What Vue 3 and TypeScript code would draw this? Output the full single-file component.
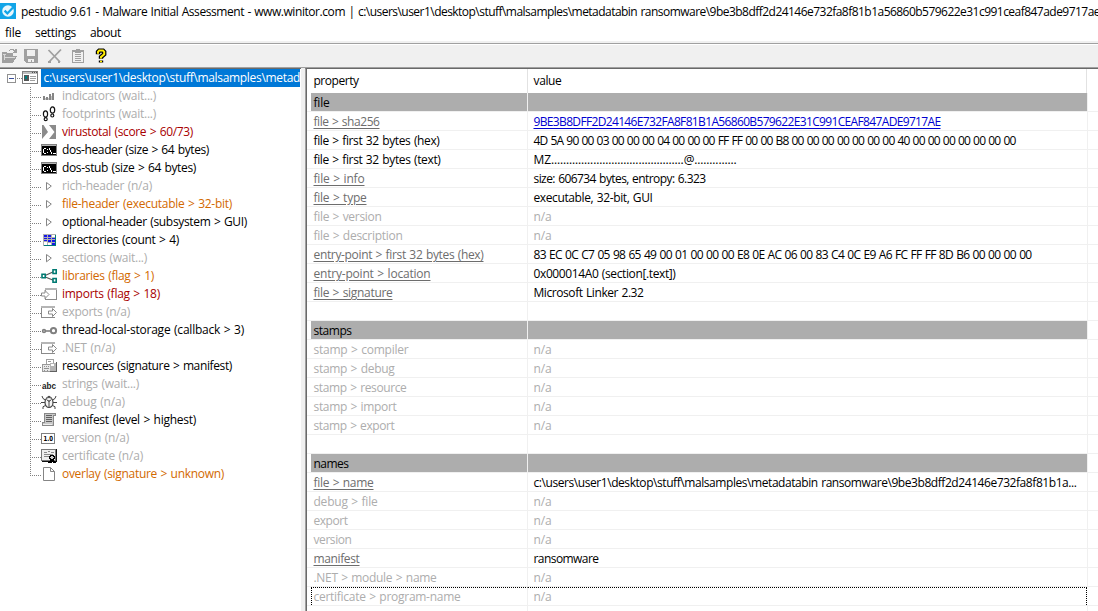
<script setup lang="ts">
interface TreeItem {
  icon: string
  label: string
  width: number
  tone: 'idle' | 'plain' | 'warn' | 'alert'
}
interface Row {
  name: string
  nameWidth: number
  value?: string
  valueWidth?: number
  kind: 'group' | 'idle' | 'plain' | 'link' | 'blank'
  hash?: boolean
  focused?: boolean
}

// Spreads letter spacing so a label takes exactly the given width.
const vFit = {
  mounted(el: HTMLElement, binding: { value?: number }) {
    const chars = (el.textContent ?? '').length
    if (!binding.value || !chars) return
    const natural = el.getBoundingClientRect().width
    el.style.letterSpacing = `${(binding.value - natural) / chars}px`
  },
}

const menus = [
  { label: 'file', width: 16 },
  { label: 'settings', width: 41 },
  { label: 'about', width: 31 },
]

const tree: TreeItem[] = [
  { icon: 'bars', label: 'indicators (wait...)', width: 94, tone: 'idle' },
  { icon: 'feet', label: 'footprints (wait...)', width: 94, tone: 'idle' },
  { icon: 'virus', label: 'virustotal (score > 60/73)', width: 131, tone: 'alert' },
  { icon: 'dos', label: 'dos-header (size > 64 bytes)', width: 147, tone: 'plain' },
  { icon: 'dos', label: 'dos-stub (size > 64 bytes)', width: 134, tone: 'plain' },
  { icon: 'tri', label: 'rich-header (n/a)', width: 90, tone: 'idle' },
  { icon: 'tri', label: 'file-header (executable > 32-bit)', width: 170, tone: 'warn' },
  { icon: 'tri', label: 'optional-header (subsystem > GUI)', width: 185, tone: 'plain' },
  { icon: 'grid', label: 'directories (count > 4)', width: 117, tone: 'plain' },
  { icon: 'tri', label: 'sections (wait...)', width: 85, tone: 'idle' },
  { icon: 'share', label: 'libraries (flag > 1)', width: 92, tone: 'warn' },
  { icon: 'import', label: 'imports (flag > 18)', width: 98, tone: 'alert' },
  { icon: 'export', label: 'exports (n/a)', width: 68, tone: 'idle' },
  { icon: 'link', label: 'thread-local-storage (callback > 3)', width: 182, tone: 'plain' },
  { icon: 'export', label: '.NET (n/a)', width: 53, tone: 'idle' },
  { icon: 'res', label: 'resources (signature > manifest)', width: 170, tone: 'plain' },
  { icon: 'abc', label: 'strings (wait...)', width: 77, tone: 'idle' },
  { icon: 'bug', label: 'debug (n/a)', width: 63, tone: 'idle' },
  { icon: 'scroll', label: 'manifest (level > highest)', width: 134, tone: 'plain' },
  { icon: 'ver', label: 'version (n/a)', width: 67, tone: 'idle' },
  { icon: 'cert', label: 'certificate (n/a)', width: 81, tone: 'idle' },
  { icon: 'page', label: 'overlay (signature > unknown)', width: 162, tone: 'warn' },
]

const idle = (name: string, nameWidth: number): Row => ({
  name, nameWidth, value: 'n/a', valueWidth: 18, kind: 'idle',
})
const blank: Row = { name: '', nameWidth: 0, kind: 'blank' }

const rows: Row[] = [
  { name: 'file', nameWidth: 16, kind: 'group' },
  { name: 'file > sha256', nameWidth: 66, value: '9BE3B8DFF2D24146E732FA8F81B1A56860B579622E31C991CEAF847ADE9717AE', valueWidth: 407, kind: 'link', hash: true },
  { name: 'file > first 32 bytes (hex)', nameWidth: 126, value: '4D 5A 90 00 03 00 00 00 04 00 00 00 FF FF 00 00 B8 00 00 00 00 00 00 00 40 00 00 00 00 00 00 00', valueWidth: 482, kind: 'plain' },
  { name: 'file > first 32 bytes (text)', nameWidth: 127, value: 'MZ' + '.'.repeat(44) + '@' + '.'.repeat(14), valueWidth: 203, kind: 'plain' },
  { name: 'file > info', nameWidth: 51, value: 'size: 606734 bytes, entropy: 6.323', valueWidth: 172, kind: 'link' },
  { name: 'file > type', nameWidth: 53, value: 'executable, 32-bit, GUI', valueWidth: 119, kind: 'link' },
  idle('file > version', 68),
  idle('file > description', 89),
  { name: 'entry-point > first 32 bytes (hex)', nameWidth: 170, value: '83 EC 0C C7 05 98 65 49 00 01 00 00 00 E8 0E AC 06 00 83 C4 0C E9 A6 FC FF FF 8D B6 00 00 00 00', valueWidth: 498, kind: 'link' },
  { name: 'entry-point > location', nameWidth: 117, value: '0x000014A0 (section[.text])', valueWidth: 142, kind: 'link' },
  { name: 'file > signature', nameWidth: 79, value: 'Microsoft Linker 2.32', valueWidth: 110, kind: 'link' },
  blank,
  { name: 'stamps', nameWidth: 38, kind: 'group' },
  idle('stamp > compiler', 95),
  idle('stamp > debug', 81),
  idle('stamp > resource', 93),
  idle('stamp > import', 83),
  idle('stamp > export', 81),
  blank,
  { name: 'names', nameWidth: 35, kind: 'group' },
  { name: 'file > name', nameWidth: 60, value: 'c:\\users\\user1\\desktop\\stuff\\malsamples\\metadatabin ransomware\\9be3b8dff2d24146e732fa8f81b1a...', valueWidth: 543, kind: 'link' },
  idle('debug > file', 64),
  idle('export', 34),
  idle('version', 38),
  { name: 'manifest', nameWidth: 46, value: 'ransomware', valueWidth: 65, kind: 'link' },
  idle('.NET > module > name', 123),
  { ...idle('certificate > program-name', 147), focused: true },
  blank,
]
</script>

<template>
  <div class="window">
    <header class="title">
      <svg class="logo" width="16" height="16" viewBox="0 0 16 16">
        <rect width="16" height="16" fill="#12a5e8" />
        <circle cx="8" cy="8" r="5.8" fill="#e9f7fd" />
        <path d="M4.6 7.6 7.4 10.4 13 4.6" fill="none" stroke="#12a5e8" stroke-width="2.2" />
      </svg>
      <div class="caption">
        <span v-fit="337" class="t">pestudio 9.61 - Malware Initial Assessment - www.winitor.com | </span>
        <span v-fit="742" class="t">c:\users\user1\desktop\stuff\malsamples\metadatabin ransomware\9be3b8dff2d24146e732fa8f81b1a56860b579622e31c991ceaf847ade9717ae</span>
      </div>
    </header>
    <nav class="menu">
      <span v-for="m in menus" :key="m.label" v-fit="m.width" class="t">{{ m.label }}</span>
    </nav>
    <div class="toolbar">
      <svg width="108" height="20" viewBox="0 0 108 20" shape-rendering="crispEdges">
        <g fill="#a0a0a0">
          <path d="M2 6h4l1 1h6v3h4l-4 7H2z" />
          <path d="M3 8h3v1H3zM5 11h10v1H5zM4 9h1v5H4z" fill="#d8d8d8" />
          <path d="M9 4h1V3h4v1h1V3h2v4h-4V6h1V5h-1V4h-3v1H9z" />
          <path d="M24 3h14v14H26l-2-2z" />
          <path d="M27 4h8v6h-8zM28 13h6v3h-2v-2h-1v2h-3z" fill="#f0f0f0" />
          <path d="M72 4h4V3h4v1h4v13H72zM73 6v10h10V6z" fill-rule="evenodd" />
          <path d="M75 4h6v3h-6zM75 8h6v1h-6zM75 10h6v1h-6zM75 12h6v1h-6zM75 14h6v1h-6z" />
        </g>
        <path d="M48.500 4 60 16M61 3.500 48.500 16.500" stroke="#a0a0a0" stroke-width="1.800" fill="none" shape-rendering="auto" />
        <path d="M48 15h3v2h-3zM58 15h2v2h-2z" fill="#a0a0a0" />
        <g shape-rendering="auto" fill="none">
          <path d="M98 8.200V5.800L99.200 4.600H103L104.200 5.800V8.200L101 11V12.800M101 14.600V16.600" stroke="#000" stroke-width="4.400" />
          <path d="M98 7.800V5.800L99.200 4.600H103L104.200 5.800V8.200L101 11V12.400M101 14.800V16.200" stroke="#ffec00" stroke-width="2" />
        </g>
      </svg>
    </div>

    <main class="panes">
      <section class="tree">
        <div class="root">
          <svg width="41" height="18" viewBox="0 0 41 18" shape-rendering="crispEdges">
            <path d="M7.500 5.500h8v8h-8z" fill="#fff" stroke="#919191" />
            <path d="M9 9h5v1H9z" fill="#3b4f9b" />
            <path d="M17 9.500h5" stroke="#808080" stroke-dasharray="1 1" />
            <path d="M22.500 2.500h15v12h-15z" fill="#fff" stroke="#808080" />
            <path d="M23 3h14v2H23z" fill="#c0c0c0" />
            <path d="M32 3h1v1h-1zM34 3h1v1h-1zM36 3h1v1h-1z" fill="#505050" />
            <path d="M24 6h5v6h-5z" fill="#555" /><path d="M25 7h2v3h-2z" fill="#007f7f" />
            <path d="M30 7h6v1h-6zM30 9h6v1h-6zM30 11h5v1h-5z" fill="#a0a0a0" />
          </svg>
          <div class="selected"><span v-fit="256.5" class="t">c:\users\user1\desktop\stuff\malsamples\metad</span></div>
        </div>
        <div v-for="(item, i) in tree" :key="item.label" class="node">
          <svg class="branch" width="11" height="18" viewBox="0 0 11 18" shape-rendering="crispEdges">
            <path :d="i === tree.length - 1 ? 'M.5 0V11' : 'M.5 0V18'" stroke="#808080" stroke-dasharray="1 1" />
            <path d="M2 10.500H11" stroke="#808080" stroke-dasharray="1 1" />
          </svg>
          <svg class="icon" width="17" height="18" viewBox="0 0 17 18" shape-rendering="crispEdges">
            <g v-if="item.icon === 'bars'" fill="#858585">
              <path d="M2 9h2v4H2zM5 10h2v3H5zM8 7h2v6H8zM11 6h2v7h-2z" />
              <path d="M4 11h1v2H4zM7 11h1v2H7zM10 9h1v4h-1z" fill="#c4c4c4" />
            </g>
            <g v-else-if="item.icon === 'feet'" fill="#fff" stroke="#111" stroke-width="1.200" shape-rendering="auto">
              <ellipse cx="4.500" cy="9" rx="2.100" ry="3.100" /><ellipse cx="4.700" cy="14.200" rx="1.500" ry="1.500" />
              <ellipse cx="11.500" cy="5" rx="2.200" ry="3.100" /><ellipse cx="11.300" cy="10.500" rx="1.500" ry="1.500" />
            </g>
            <g v-else-if="item.icon === 'virus'" shape-rendering="auto">
              <path d="M1 2h14v14H1z" fill="#8b8b8b" />
              <path d="M2.500 2H8L13.500 9 8 16H1l6-7z" fill="#fff" />
            </g>
            <g v-else-if="item.icon === 'dos'">
              <path d="M0 3h16v12H0z" fill="#000" />
              <path d="M0 3h16v2H0z" fill="#b4b4b4" />
              <path d="M10 3h1v1h-1zM12 3h1v1h-1zM14 3h1v1h-1z" fill="#333" />
              <path d="M.5 3.500h15v11H.5z" stroke="#808080" fill="none" />
              <path d="M3 7h2v1H3v4h2v1H3v-1H2V8h1zM6 8h1v1H6zM6 11h1v1H6zM8 7h1v2h1v2h1v2h-1v-2H9V9H8zM12 12h3v1h-3z" fill="#fff" />
            </g>
            <path v-else-if="item.icon === 'tri'" d="M5.500 5.500V12.800L10.300 9.100Z" stroke="#858585" fill="#fff" shape-rendering="auto" />
            <g v-else-if="item.icon === 'grid'">
              <path d="M2 3h13v12H2z" fill="#b0b0b0" />
              <path d="M3 4h3v2H3zM7 4h3v2H7zM3 7h3v1H3zM7 7h3v1H7zM11 7h3v1h-3zM3 9h3v1H3zM7 9h3v2H7zM11 9h3v2h-3zM11 12h3v2h-3z" fill="#1616e8" />
              <path d="M11 4h3v2h-3zM3 11h3v3H3zM7 12h3v2H7z" fill="#fff" />
              <path d="M14 4h1v11H3v-1h11z" fill="#007878" />
            </g>
            <g v-else-if="item.icon === 'share'" shape-rendering="auto">
              <path d="M3 9 13 4.500M3 9.500 13 13.500" stroke="#555" stroke-width="1.300" />
              <path d="M1 7.300h3.200v3.500H1zM12 2.800h3.200v3.700h-3.200zM12 11.500h3.200v3.700h-3.200z" fill="#fff" stroke="#007a72" stroke-width="1.600" />
            </g>
            <g v-else-if="item.icon === 'import'">
              <path d="M4.500 6V3.500h11v11h-11V13" fill="#fff" stroke="#8a8a8a" /><path d="M4 3h12v2H4z" fill="#b5b5b5" />
              <path d="M.5 8h3.500V5.500L8 9.500l-4 4V11H.5z" fill="#fff" stroke="#8a8a8a" shape-rendering="auto" />
            </g>
            <g v-else-if="item.icon === 'export'">
              <path d="M.5 3.500h13v11H.5z" fill="#fff" stroke="#8a8a8a" /><path d="M0 3h14v2H0z" fill="#b5b5b5" />
              <path d="M12 5h3v9h-3z" fill="#fff" />
              <path d="M7.500 8h4V5.500l4 4-4 4V11h-4z" fill="#fff" stroke="#8a8a8a" shape-rendering="auto" />
            </g>
            <g v-else-if="item.icon === 'link'" fill="none" stroke="#808080" shape-rendering="auto">
              <circle cx="3" cy="10" r="1.400" stroke-width="1.600" /><path d="M4 10h6" stroke-width="1.600" />
              <circle cx="12.500" cy="9.700" r="2.600" stroke-width="2" />
            </g>
            <g v-else-if="item.icon === 'res'">
              <path d="M5.500 2.500h7v6h-7z" fill="#fff" stroke="#a0a0a0" />
              <path d="M7 4h3v1H7z" fill="#999" />
              <path d="M1.500 7.500h9v7h-9z" fill="#e8e8e8" stroke="#999" />
              <path d="M3 9h1v1H3zM5 9h1v1H5zM7 9h1v1H7zM3 11h5v1H3zM3 13h1v1H3zM6 13h1v1H6z" fill="#909090" />
              <path d="M9 6h6v8H9z" fill="#b4b4b4" /><path d="M10 7h3v2h-3z" fill="#fff" />
              <path d="M15 5h1v10H9v-1h6z" fill="#606060" />
            </g>
            <text v-else-if="item.icon === 'abc'" x="1" y="13.500" class="abc" textLength="14" lengthAdjust="spacingAndGlyphs">abc</text>
            <g v-else-if="item.icon === 'bug'" fill="none" stroke="#444" shape-rendering="auto">
              <ellipse cx="8" cy="9.500" rx="4" ry="5" fill="#f4f4f4" stroke-width="1.200" />
              <path d="M5.500 5Q8 1.500 10.500 5M8 7v7.500M5.500 6.500 8 8.500l2.500-2M4 9.500H0M12 9.500h4M4.500 7 2 5.500 1 3M11.500 7 14 5.500l1-2.500M4.500 12.500 2 13.700V16M11.500 12.500l2.500 1.200V16" />
            </g>
            <g v-else-if="item.icon === 'scroll'">
              <path d="M3.500 2.500h11v2h-2v10h-11v-3h2z" fill="#c8c8c8" stroke="#888" />
              <path d="M5 4h6v1H5zM5 6h6v1H5zM5 8h6v1H5zM5 10h6v1H5z" fill="#606060" />
              <path d="M2 13h9v1H2z" fill="#eee" />
            </g>
            <g v-else-if="item.icon === 'ver'">
              <path d="M.5 4.500h13v10H.5z" fill="#fff" stroke="#808080" />
              <text x="2.500" y="12.200" class="ver" textLength="9.500" lengthAdjust="spacingAndGlyphs">1.0</text>
            </g>
            <g v-else-if="item.icon === 'cert'">
              <path d="M.5 2.500h14v11H.5z" fill="#eee" stroke="#777" /><path d="M15 2h1v13H1v-1h14z" fill="#111" />
              <path d="M3 5h3v1H3zM7 4h2v1H7zM10 5h3v1h-3zM3 7h9v1H3zM3 9h5v1H3z" fill="#888" />
              <circle cx="11" cy="10.500" r="2.200" fill="#ccc" stroke="#000" stroke-width="1.300" />
              <path d="M9 13h4l2 3h-3l-1-1-1 1H7z" fill="#000" />
            </g>
            <path v-else d="M2.500 2.500h7l4 4v9h-11zM9.500 2.500v4h4" fill="#fff" stroke="#858585" shape-rendering="auto" />
          </svg>
          <span v-fit="item.width" class="t" :class="item.tone">{{ item.label }}</span>
        </div>
      </section>

      <section class="table">
        <div class="columns">
          <div class="cell name"><span v-fit="45" class="t">property</span></div>
          <div class="cell value"><span v-fit="28" class="t">value</span></div>
        </div>
        <div v-for="(r, i) in rows" :key="i" class="row" :class="[r.kind, { focused: r.focused }]">
          <div class="cell name"><span v-if="r.name" v-fit="r.nameWidth" class="t">{{ r.name }}</span></div>
          <div class="cell value"><span v-if="r.value" v-fit="r.valueWidth" class="t" :class="{ hash: r.hash }">{{ r.value }}</span></div>
        </div>
      </section>
    </main>
  </div>
</template>

<style>
body { margin: 0; overflow: hidden; }
</style>

<style scoped>
.window {
  display: flex;
  flex-direction: column;
  box-sizing: border-box;
  width: 1098px;
  height: 611px;
  overflow: hidden;
  background: #fff;
  color: #000;
  font: 12px/18px "Open Sans", "Noto Sans", sans-serif;
  word-spacing: 0.7px;
}
svg { display: block; flex: none; }
.t { display: inline-block; flex: none; white-space: pre; }
.title { display: flex; gap: 5px; height: 23px; padding-top: 3px; box-sizing: border-box; align-items: flex-start; }
.caption { display: flex; }
.menu { display: flex; gap: 14px; height: 18px; padding-left: 5px; line-height: 20px; }
.toolbar {
  height: 27px;
  box-sizing: border-box;
  padding-top: 3px;
  border-top: 2px solid #f0f0f0;
  border-bottom: 1px solid #a0a0a0;
  box-shadow: inset 0 1px #a0a0a0, inset 0 2px #fff;
  background: #f0f0f0;
}
.panes { display: flex; height: 543px; background: #f0f0f0; }
.tree { width: 301px; box-sizing: border-box; border-top: 1px solid #696969; background: #fff; overflow: hidden; }
.root { display: flex; height: 18px; }
.selected { width: 259px; height: 18px; box-sizing: border-box; padding-left: 2.5px; overflow: hidden; background: #0078d7; color: #fff; }
.node { display: flex; height: 18px; padding-left: 30px; }
.icon { margin-right: 4px; }
.idle { color: #adadad; }
.alert { color: #a80000; }
.warn { color: #d26900; }
.abc { font: bold 9px/10px "Liberation Sans", sans-serif; fill: #222; }
.ver { font: bold 7px/8px "DejaVu Sans", sans-serif; fill: #000; }
.table {
  width: 793px;
  margin-left: 4px;
  box-sizing: border-box;
  border-left: 1px solid #a0a0a0;
  border-top: 1px solid #696969;
  box-shadow: inset 1px 0 #696969;
  padding-left: 1px;
  overflow: hidden;
  background: #fff;
}
.columns { display: flex; height: 24px; line-height: 24px; }
.columns .cell { border-right: 1px solid #e2e2e2; }
.row { display: flex; height: 19px; box-sizing: border-box; border-bottom: 1px solid #f0f0f0; line-height: 20px; }
.cell { flex: none; box-sizing: border-box; height: 100%; border-right: 1px solid #f0f0f0; }
.name { width: 221px; padding-left: 6.5px; }
.value { width: 560px; padding-left: 5.5px; }
.columns .value { width: 559px; }
.group .cell { background: #adadad; }
.group .name { margin-left: 4px; width: 217px; padding-left: 2.5px; }
.link .name .t { color: #6d6d6d; text-decoration: underline; text-underline-offset: 2px; }
.link .value .hash { color: #0000d0; text-decoration: underline; text-underline-offset: 2px; }
.idle.row .t { color: #adadad; }
.row.idle { color: #adadad; }
.focused .name { margin-left: 4px; width: 217px; padding-left: 1.5px; border-left: 1px dotted #000; }
.focused .cell { border-top: 1px dotted #000; line-height: 18px; }
.focused .value { width: 559px; border-right: 1px dotted #000; }
</style>
